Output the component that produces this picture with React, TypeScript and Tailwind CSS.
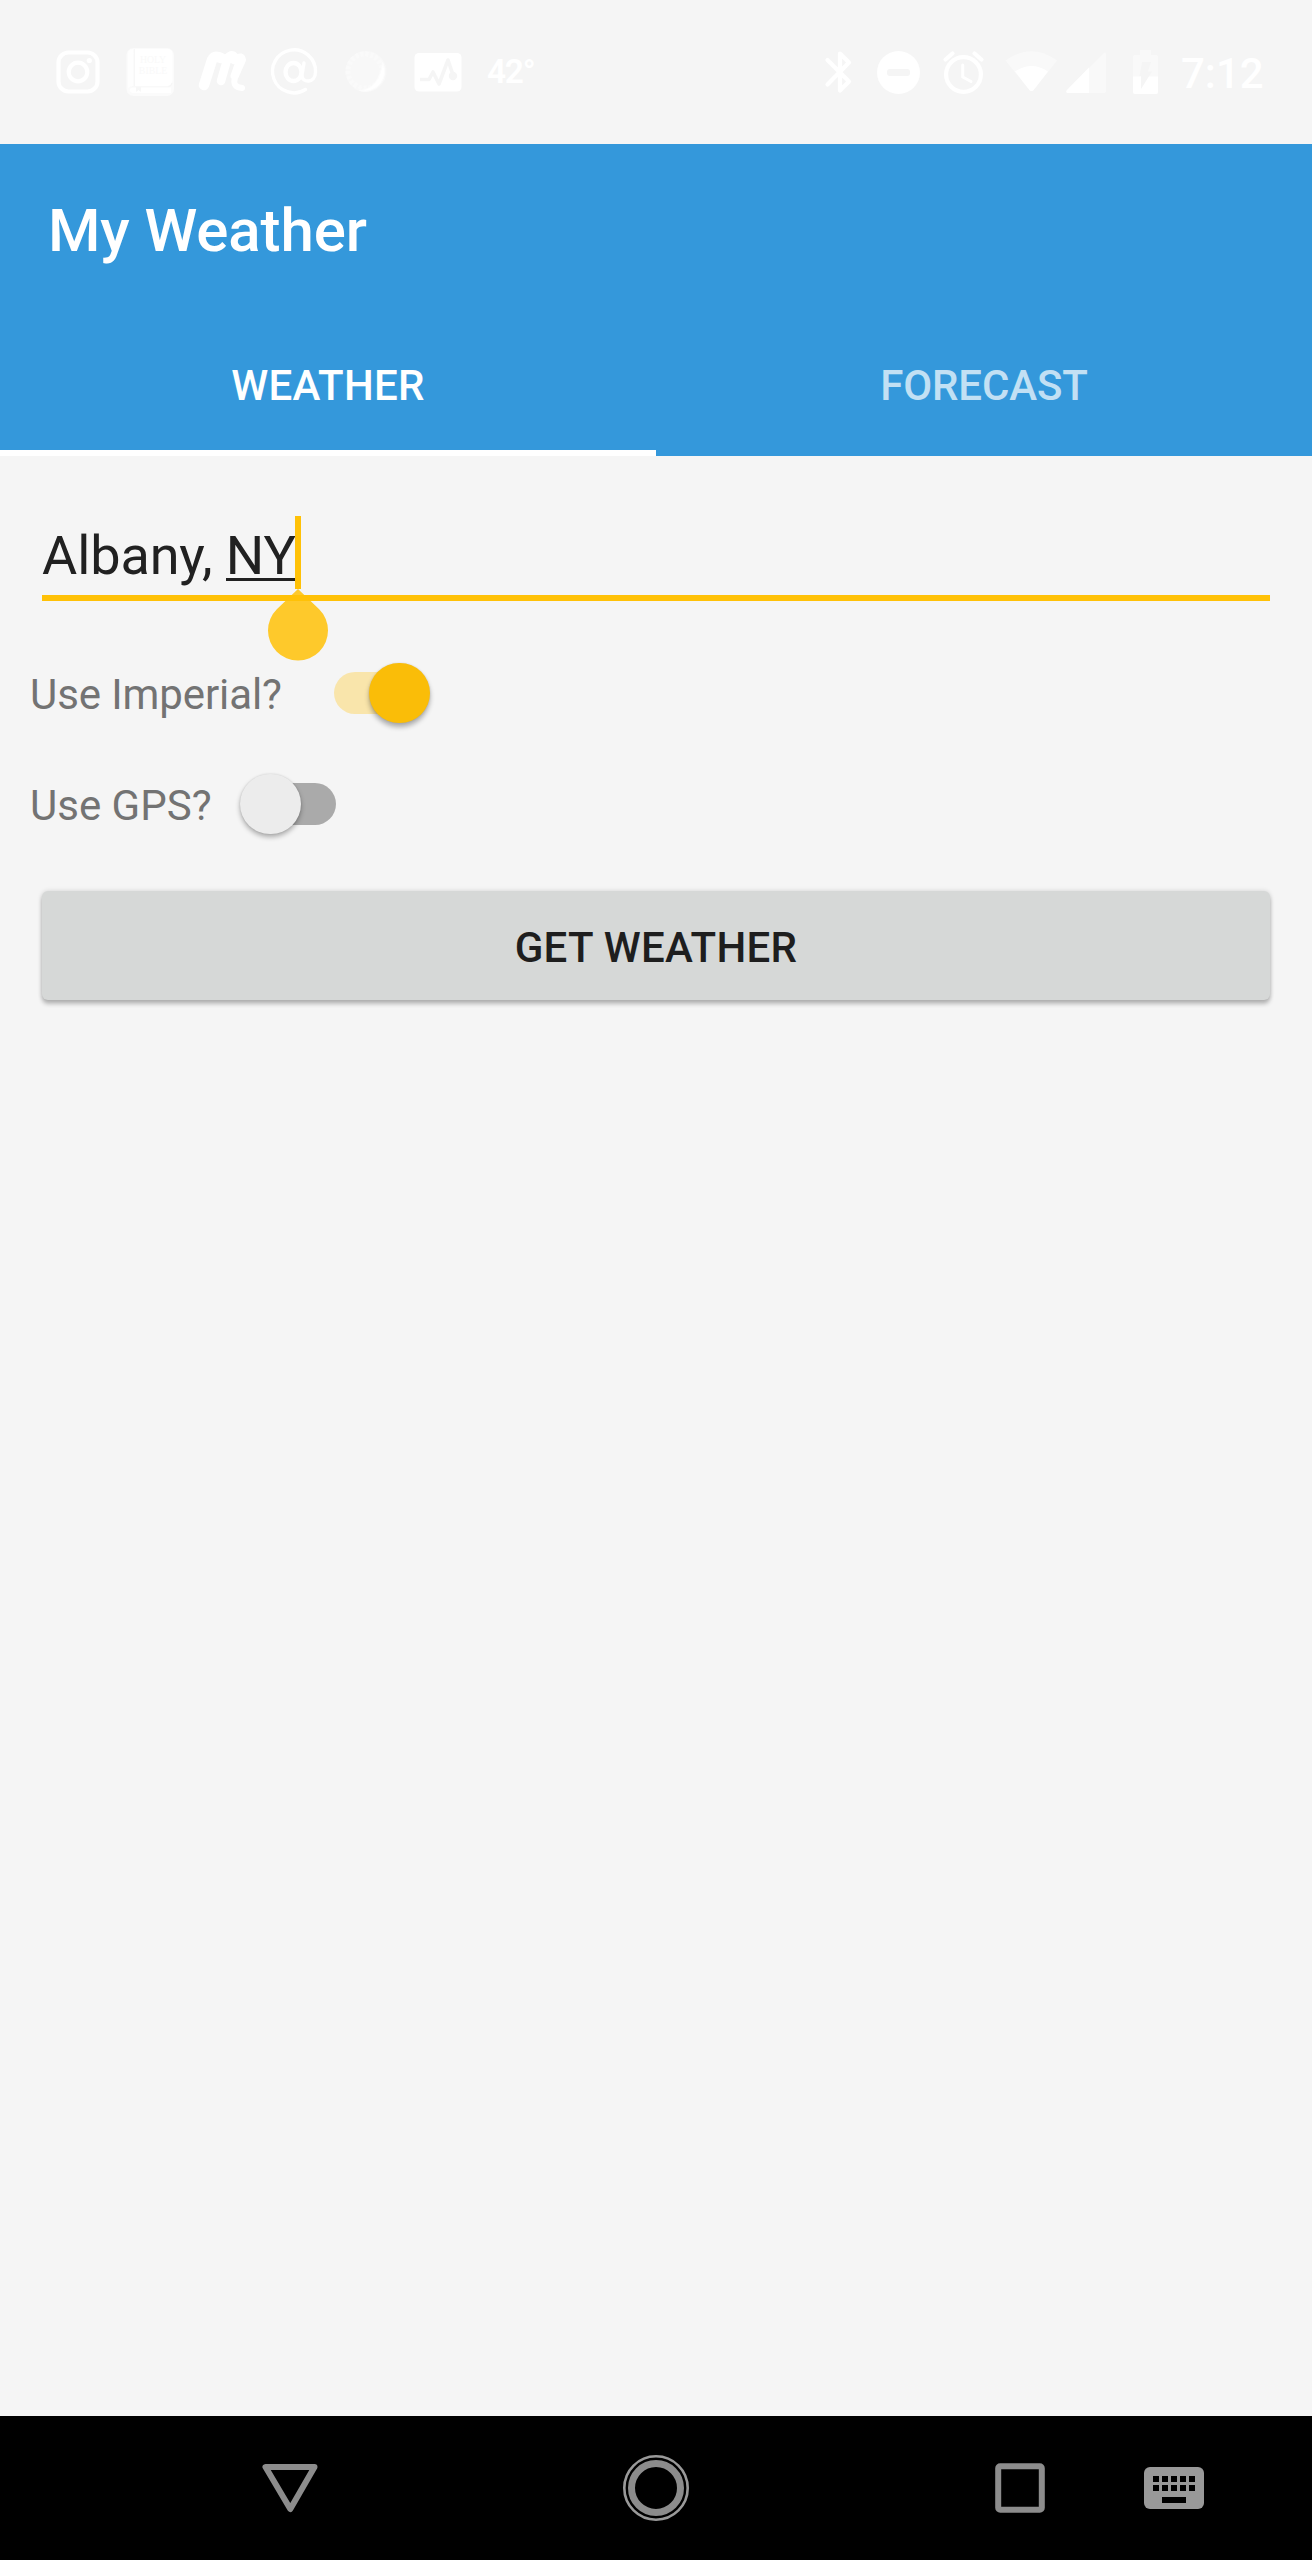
import React from "react";

function StatusIcons() {
  return (
    <svg className="block h-36 w-[1312px]" viewBox="0 0 1312 144" fill="none">
      {/* camera */}
      <rect x="58.5" y="52.5" width="39" height="39" rx="10" stroke="#fff" strokeWidth="4.2" />
      <circle cx="78" cy="72" r="9.3" stroke="#fff" strokeWidth="4.2" />
      <circle cx="89.3" cy="60.5" r="2.6" fill="#fff" />
      {/* book */}
      <rect x="126.5" y="48" width="47.500" height="48" rx="7" fill="#fbfbfb" />
      <path d="M135 49H167Q172.500 49 172.500 54V80Q172.500 85 167 86H135Z" fill="#fff" />
      <path d="M128 54Q128 49 133.500 49V86Q130 86 128 88Z" fill="#fefefe" />
      <path d="M134.300 49V86" stroke="#f7f7f7" strokeWidth="1" />
      <path d="M132 87H168Q172 86 172 83" stroke="#f6f6f6" strokeWidth="1" />
      <path d="M132 87.5H171V93H132Q127 90 132 87.5Z" fill="#fff" />
      <path d="M136 87H141V92L138.500 90L136 92Z" fill="#f7f7f7" />
      <text x="153" y="62.500" textAnchor="middle" fontFamily="Liberation Serif" fontSize="9.800" fill="#f9f9f9">HOLY</text>
      <text x="153" y="73.500" textAnchor="middle" fontFamily="Liberation Serif" fontSize="9.800" fill="#f9f9f9">BIBLE</text>
      {/* script mark */}
      <path d="M204 85L212 60Q214 56 218 57L221 58" stroke="#fff" strokeWidth="10.500" strokeLinecap="round" strokeLinejoin="round" />
      <path d="M221 81L227 60Q229 54 234 60" stroke="#fff" strokeWidth="8.500" strokeLinecap="round" strokeLinejoin="round" />
      <path d="M212 57Q220 53 224 59L229 55Q234 52 236 58Q242 54 243 60L235 78Q232 87 242 88" stroke="#fff" strokeWidth="6" strokeLinecap="round" strokeLinejoin="round" />
      <path d="M240 59L234 76" stroke="#fff" strokeWidth="7" strokeLinecap="round" />
      {/* at sign */}
      <path d="M305.500 89.500A21.500 21.500 0 1 1 315.500 72C315.500 83.500 301.500 83.500 302 75L304 63" stroke="#fff" strokeWidth="3.400" strokeLinecap="round" />
      <ellipse cx="293.500" cy="72" rx="8" ry="9" stroke="#fff" strokeWidth="4.400" />
      {/* dial */}
      <circle cx="366" cy="71.500" r="20.500" fill="#f8f8f8" />
      <circle cx="365" cy="71" r="17" stroke="#fafafa" strokeWidth="5" strokeDasharray="3 2" />
      <path d="M382.500 62A20 20 0 0 1 359 90.500Q379 89 382.500 62Z" fill="#fff" stroke="#fcfcfc" strokeWidth="1" />
      {/* activity graph */}
      <rect x="414.500" y="53" width="47" height="38.500" rx="4.500" fill="#fff" />
      <path d="M420 79.500H429L433 72L439 84L448 60L453 75" stroke="#f5f5f5" strokeWidth="3.600" strokeLinejoin="round" />
      <circle cx="453" cy="76" r="4.200" fill="#f5f5f5" />
      <text x="487" y="83" fontFamily="Roboto" fontSize="33.500" fontWeight="600" letterSpacing="-1.300" fill="#fff">42°</text>
      {/* bluetooth */}
      <path d="M827.500 60L849 81.500L840 90.500V53.500L849 62.500L827.500 84.500" stroke="#fff" strokeWidth="4.200" strokeLinecap="round" strokeLinejoin="round" />
      {/* do not disturb */}
      <circle cx="898.500" cy="72.500" r="21.500" fill="#fff" />
      <rect x="887" y="69" width="23" height="7" rx="3" fill="#f5f5f5" />
      {/* alarm */}
      <circle cx="963.500" cy="74.500" r="17.400" stroke="#fff" strokeWidth="4.200" />
      <path d="M962.700 65V77L971 81.500" stroke="#fff" strokeWidth="3" strokeLinecap="round" strokeLinejoin="round" />
      <path d="M945.500 59.500L952.500 53.500M974.500 53.500L981.500 59.500" stroke="#fff" strokeWidth="4.200" strokeLinecap="round" />
      {/* wifi */}
      <path d="M1005.500 60.500Q1031.500 42 1057 60.500L1034 89.500Q1031.500 92.500 1029 89.500Z" fill="#f9f9f9" />
      <path d="M1015 71.500Q1031.500 60.500 1048 71.500L1034 89.500Q1031.500 92.500 1029 89.500Z" fill="#fff" />
      {/* signal */}
      <path d="M1067 90L1104 53Q1106 52 1106 54V91Q1106 93 1104 93H1068Q1065 92.500 1067 90Z" fill="#f9f9f9" />
      <path d="M1067 90L1089 67.500V93H1068Q1065 92.500 1067 90Z" fill="#fff" />
      {/* battery */}
      <path d="M1140 50H1151V55H1156Q1158 55 1158 57V92Q1158 94 1156 94H1135Q1133 94 1133 92V57Q1133 55 1135 55H1140Z" fill="#f9f9f9" />
      <path d="M1133 76.500H1158V92Q1158 94 1156 94H1135Q1133 94 1133 92Z" fill="#fff" />
      <path d="M1142 62H1151L1148 71.500H1152L1141 89V76H1139.500Z" fill="#f5f5f5" />
      <text x="1181" y="88" fontFamily="Roboto" fontSize="42" fontWeight="500" fill="#fff">7:12</text>
    </svg>
  );
}

function Switch({ on }: { on: boolean }) {
  return (
    <span className="relative flex h-[61px] w-24 items-center" role="switch" aria-checked={on}>
      <span className={on ? "h-[42px] w-20 rounded-full bg-[#f9e5ab]" : "ml-4 h-[42px] w-20 rounded-full bg-[#aaaaaa]"} />
      <span
        className={
          on
            ? "absolute left-[35px] top-[0.5px] size-[60.5px] rounded-full bg-[#fabd08] shadow-[0_4px_5px_rgba(0,0,0,0.3),0_0_2px_rgba(0,0,0,0.12)]"
            : "absolute left-0 top-[0.5px] size-[60.5px] rounded-full bg-[#ececec] shadow-[0_3px_5px_rgba(0,0,0,0.3),0_0_2px_rgba(0,0,0,0.12)]"
        }
      />
    </span>
  );
}

export default function App() {
  return (
    <div className="flex h-[2560px] w-[1312px] flex-col overflow-hidden bg-[#f5f5f5] font-['Roboto',sans-serif]">
      <StatusIcons />
      <header className="flex h-[312px] flex-col bg-[#3498db] text-white">
        <h1 className="flex h-[172px] items-center pl-12 pt-0.5 text-[60px] font-medium leading-none tracking-[-0.1px]">My Weather</h1>
        <nav className="grid h-[140px] grid-cols-2 text-[42px] font-medium">
          <div className="flex items-center justify-center border-b-6 border-white pt-[5px] tracking-[0.3px]">WEATHER</div>
          <div className="flex items-center justify-center border-b-6 border-transparent pt-[5px] tracking-[-0.1px] text-[#c2e0f4]">FORECAST</div>
        </nav>
      </header>
      <main className="flex flex-1 flex-col">
        <div className="relative mx-[42px] h-[145px] border-b-6 border-[#ffc107] pt-[68px] text-[54px] leading-[64px] tracking-[-0.1px] text-[#212121]">
          Albany, <span className="relative">NY<span className="absolute inset-x-0 bottom-[6px] h-[3px] bg-[#212121]" /></span>
          <span className="absolute left-[253px] top-[60px] h-[73px] w-1.5 bg-[#ffc107]" />
          <svg className="absolute left-[226px] top-[133px] h-[73px] w-[60px]" viewBox="0 0 60 73">
            <path d="M30 0L51.200 20.300A30 30 0 1 1 8.800 20.300Z" fill="#ffc107" fillOpacity="0.85" />
          </svg>
        </div>
        <div className="mt-[61px] flex h-[61px] items-center pl-[30px] text-[42px] leading-none text-[#737373]">
          <span className="w-[304px] pt-[5px] tracking-[-0.1px]">Use Imperial?</span>
          <Switch on />
        </div>
        <div className="mt-[50px] flex h-[61px] items-center pl-[30px] text-[42px] leading-none text-[#737373]">
          <span className="w-[210px] pt-[5px]">Use GPS?</span>
          <Switch on={false} />
        </div>
        <button className="mx-[42px] mt-[57px] flex h-[109px] items-center justify-center rounded-[6px] bg-[#d6d8d7] pt-[3px] text-[42px] font-medium tracking-[0.3px] text-[#1e1e1e] shadow-[0_4px_4px_rgba(0,0,0,0.24),0_0_5px_rgba(0,0,0,0.14)]">
          GET WEATHER
        </button>
      </main>
      <footer className="h-36 bg-black">
        <svg className="block h-36 w-[1312px]" viewBox="0 2416 1312 144" fill="none">
          <path d="M265.500 2467H314.500L290.300 2509Z" stroke="#8c8c8c" strokeWidth="6" strokeLinejoin="round" />
          <circle cx="656" cy="2488" r="24.500" stroke="#8c8c8c" strokeWidth="7" />
          <circle cx="656" cy="2488" r="31.700" stroke="#999" strokeWidth="2.600" />
          <rect x="998.200" y="2466.200" width="43.600" height="43.600" rx="2" stroke="#8c8c8c" strokeWidth="6" />
          <rect x="1144" y="2467" width="60" height="42" rx="6" fill="#999" />
          <path d="M1153 2479H1195M1153 2488H1195" stroke="#000" strokeWidth="6" strokeDasharray="6 3" />
          <rect x="1162" y="2497" width="24" height="6" fill="#000" />
        </svg>
      </footer>
    </div>
  );
}
